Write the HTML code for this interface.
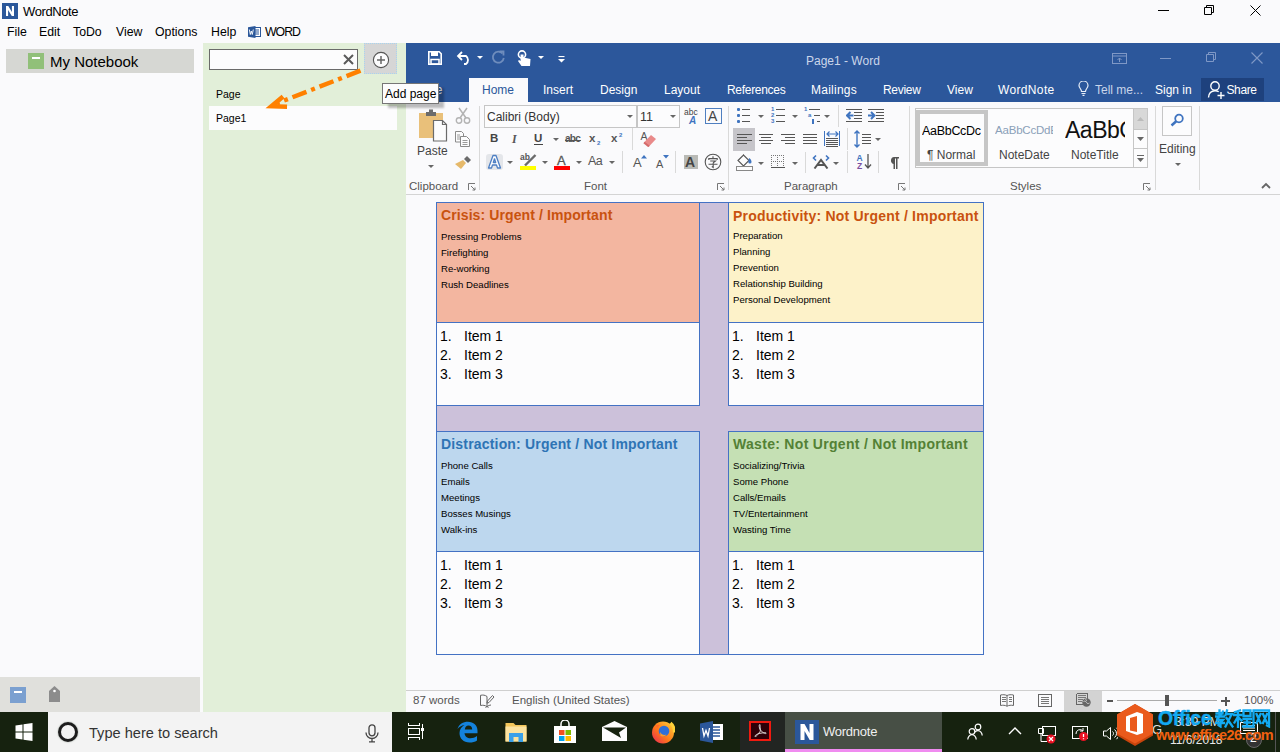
<!DOCTYPE html>
<html><head><meta charset="utf-8">
<style>
*{margin:0;padding:0;box-sizing:border-box}
html,body{width:1280px;height:752px;overflow:hidden;background:#fafafc;font-family:"Liberation Sans",sans-serif;color:#000;position:relative}
.a{position:absolute}
.t{position:absolute;white-space:nowrap;line-height:1}
.hd{font-size:14px;font-weight:bold}
.it{font-size:9.6px;line-height:16px;color:#000}
.li{font-size:14px;line-height:19px;color:#000}
.li span{display:inline-block;width:24px}
.li{margin-top:-0.5px}
.mn{font-size:12.3px}
.tb{font-size:12px;color:#fff}
.sp{width:1px;background:#d9d9d9}
.gl{font-size:11.5px;color:#555}
.ln{width:8px;height:8px}
.dd{width:6px;height:4px;fill:#666}
.sb{font-size:11.5px;color:#555}
</style></head><body>

<!-- ===== App title bar ===== -->
<div class="a" style="left:2px;top:3px;width:16px;height:16px;background:#2b579a"></div>
<svg class="a" style="left:2px;top:3px" width="16" height="16" viewBox="0 0 16 16"><path d="M4 13V3h2.3l3.6 6V3H12v10H9.8L6.1 7v6z" fill="#fff"/></svg>
<div class="t" style="left:23px;top:5px;font-size:13px;color:#000;letter-spacing:-0.4px">WordNote</div>
<div class="a" style="left:1158px;top:10px;width:11px;height:1px;background:#000"></div>
<svg class="a" style="left:1203px;top:4px" width="12" height="12" viewBox="0 0 12 12"><path d="M1.5 3.5h7v7h-7z M3.5 3.5v-2h7v7h-2" fill="none" stroke="#000" stroke-width="1"/></svg>
<svg class="a" style="left:1249.5px;top:4.5px" width="11" height="11" viewBox="0 0 11 11"><path d="M0.5 0.5l10 10M10.5 0.5l-10 10" stroke="#000" stroke-width="1"/></svg>

<!-- ===== Menu bar ===== -->
<div class="t mn" style="left:7px;top:26px">File</div>
<div class="t mn" style="left:39px;top:26px">Edit</div>
<div class="t mn" style="left:73px;top:26px">ToDo</div>
<div class="t mn" style="left:116px;top:26px">View</div>
<div class="t mn" style="left:155px;top:26px">Options</div>
<div class="t mn" style="left:211px;top:26px">Help</div>
<svg class="a" style="left:248px;top:26px" width="13" height="12" viewBox="0 0 13 12"><rect x="5" y="1.5" width="7.5" height="9" fill="#fff" stroke="#2b579a"/><path d="M7 4h4M7 6h4M7 8h4" stroke="#2b579a" stroke-width="1"/><path d="M0 1.2L7.5 0v12L0 10.8z" fill="#2b579a"/><path d="M1.3 3.5l1 5 1-3.5 1 3.5 1-5" fill="none" stroke="#fff" stroke-width="0.9"/></svg>
<div class="t mn" style="left:265px;top:26px;letter-spacing:-1px">WORD</div>

<!-- ===== Left panel ===== -->
<div class="a" style="left:6px;top:49px;width:188px;height:24px;background:#d6d7d3"></div>
<div class="a" style="left:28px;top:53px;width:16px;height:16px;background:#91c079"></div>
<div class="a" style="left:32px;top:57px;width:8px;height:2px;background:#fff"></div>
<div class="t" style="left:50px;top:54px;font-size:15px">My Notebook</div>
<div class="a" style="left:0;top:677px;width:200px;height:35px;background:#e0e0dc"></div>
<div class="a" style="left:10px;top:687px;width:16px;height:16px;background:#7ba0d0"></div>
<div class="a" style="left:14px;top:691px;width:8px;height:2px;background:#fff"></div>
<svg class="a" style="left:49px;top:686px" width="11" height="16" viewBox="0 0 11 16"><path d="M0 5L5.5 0 11 5v11H0z" fill="#8c8c8c"/><circle cx="5.5" cy="5" r="1.3" fill="#fff"/></svg>

<!-- ===== Middle panel ===== -->
<div class="a" style="left:203px;top:43px;width:203px;height:669px;background:#e2efd9"></div>
<div class="a" style="left:209px;top:49px;width:149px;height:21px;background:#fcfcfd;border:1px solid #6a6a6a"></div>
<svg class="a" style="left:343px;top:54px" width="11" height="11" viewBox="0 0 11 11"><path d="M1 1l9 9M10 1l-9 9" stroke="#5a5a5a" stroke-width="2"/></svg>
<div class="a" style="left:364px;top:43px;width:33px;height:31px;background:#d6d6d6;border:1px dotted #a8d4f0"></div>
<svg class="a" style="left:372px;top:51px" width="18" height="18" viewBox="0 0 18 18"><circle cx="9" cy="9" r="7.6" fill="#fcfcfd" stroke="#555" stroke-width="1.1"/><path d="M9 5v8M5 9h8" stroke="#666" stroke-width="1.5"/></svg>
<div class="t" id="pg" style="left:216px;top:89px;font-size:10.5px">Page</div>
<div class="a" style="left:209px;top:106px;width:188px;height:24px;background:#fcfcfd"></div>
<div class="t" id="pg1" style="left:216px;top:113px;font-size:10.5px">Page1</div>
<svg class="a" style="left:260px;top:64px" width="110" height="50" viewBox="260 64 110 50">
<path d="M360.5 70.7L277 103.3" stroke="#ff8000" stroke-width="4.5" stroke-dasharray="15 5 4 5" fill="none"/>
<path d="M265.5 108.3L281.6 94.8 284.5 98.3 277.5 104.2 287.1 104.5 287 109z" fill="#ff8000"/>
</svg>
<!-- ===== Word window ===== -->
<div class="a" style="left:406px;top:43px;width:874px;height:59px;background:#2c579b"></div>
<!-- QAT -->
<svg class="a" style="left:428px;top:51px" width="14" height="14" viewBox="0 0 14 14"><path d="M0.8 0.8h10.4l2 2v10.4H0.8z" fill="none" stroke="#fff" stroke-width="1.6"/><rect x="3" y="1" width="7" height="4" fill="#fff"/><rect x="3" y="8.5" width="8" height="4.5" fill="none" stroke="#fff" stroke-width="1.5"/></svg>
<svg class="a" style="left:456px;top:51px" width="17" height="14" viewBox="0 0 17 14"><path d="M2 5h8a5 5 0 0 1 0 8H8" fill="none" stroke="#fff" stroke-width="1.8"/><path d="M6 1L2 5l4 4" fill="none" stroke="#fff" stroke-width="1.8"/></svg>
<svg class="a" style="left:477px;top:56px" width="6" height="4" viewBox="0 0 6 4"><path d="M0 0h6L3 3z" fill="#fff"/></svg>
<svg class="a" style="left:491px;top:50px" width="15" height="15" viewBox="0 0 15 15"><path d="M11.5 3.5A5.5 5.5 0 1 0 12.8 8" fill="none" stroke="#6f8dbd" stroke-width="1.8"/><path d="M8.5 1.5h4v4" fill="none" stroke="#6f8dbd" stroke-width="1.8"/></svg>
<svg class="a" style="left:517px;top:50px" width="14" height="16" viewBox="0 0 14 16"><circle cx="5" cy="4.5" r="3.6" fill="none" stroke="#fff" stroke-width="1.6"/><path d="M3.6 4.5v6.5L2 10 1 11l3.5 5h8.5L13.5 9 6.5 7.6V4.5z" fill="#fff"/></svg>
<svg class="a" style="left:538px;top:56px" width="6" height="4" viewBox="0 0 6 4"><path d="M0 0h6L3 3z" fill="#fff"/></svg>
<svg class="a" style="left:558px;top:56px" width="7" height="7" viewBox="0 0 7 7"><path d="M0.5 0.5h6" stroke="#fff" stroke-width="1.2"/><path d="M0 3h7L3.5 6.5z" fill="#fff"/></svg>
<div class="t" style="left:806px;top:55px;font-size:12px;color:#cbd6ea">Page1 - Word</div>
<!-- window controls (dim) -->
<svg class="a" style="left:1112px;top:53px" width="15" height="11" viewBox="0 0 15 11"><rect x="0.5" y="0.5" width="14" height="10" fill="none" stroke="#7f98c6"/><path d="M0.5 3h14" stroke="#7f98c6"/><path d="M7.5 9V5M5.5 7l2-2 2 2" fill="none" stroke="#7f98c6"/></svg>
<div class="a" style="left:1160px;top:58px;width:11px;height:1px;background:#7f98c6"></div>
<svg class="a" style="left:1205px;top:51px" width="12" height="12" viewBox="0 0 12 12"><path d="M1.5 3.5h7v7h-7z M3.5 3.5v-2h7v7h-2" fill="none" stroke="#7f98c6" stroke-width="1"/></svg>
<svg class="a" style="left:1251px;top:52px" width="12" height="12" viewBox="0 0 12 12"><path d="M0.5 0.5l11 11M11.5 0.5l-11 11" stroke="#7f98c6" stroke-width="1.1"/></svg>
<!-- tabs -->
<div class="a" style="left:469px;top:78px;width:59px;height:24px;background:#fafafc"></div>
<div class="t tb" style="left:423px;top:84px">File</div>
<div class="t tb" style="left:482px;top:84px;color:#2b579a">Home</div>
<div class="t tb" style="left:543px;top:84px">Insert</div>
<div class="t tb" style="left:600px;top:84px">Design</div>
<div class="t tb" style="left:664px;top:84px">Layout</div>
<div class="t tb" style="left:727px;top:84px;letter-spacing:-0.3px">References</div>
<div class="t tb" style="left:811px;top:84px;letter-spacing:0.25px">Mailings</div>
<div class="t tb" style="left:883px;top:84px;letter-spacing:-0.3px">Review</div>
<div class="t tb" style="left:947px;top:84px">View</div>
<div class="t tb" style="left:998px;top:84px;letter-spacing:0.35px">WordNote</div>
<svg class="a" style="left:1078px;top:81px" width="11" height="15" viewBox="0 0 11 15"><path d="M3.5 10.5C3.5 8 1 7 1 4.5a4.5 4.5 0 0 1 9 0C10 7 7.5 8 7.5 10.5z" fill="none" stroke="#e8eef8" stroke-width="1.2"/><path d="M3.5 12.5h4M4.5 14.3h2" stroke="#e8eef8" stroke-width="1.2"/></svg>
<div class="t tb" style="left:1095px;top:84px;color:#c9d5ea">Tell me...</div>
<div class="t tb" style="left:1155px;top:84px">Sign in</div>
<div class="a" style="left:1201px;top:78px;width:63px;height:23px;background:#1e417d"></div>
<svg class="a" style="left:1207px;top:80px" width="19" height="19" viewBox="0 0 19 19"><circle cx="8" cy="6" r="4.2" fill="none" stroke="#fff" stroke-width="1.4"/><path d="M1.5 17.5c0-4 2.8-6.8 6.5-6.8 1.5 0 2.7 0.4 3.7 1.1" fill="none" stroke="#fff" stroke-width="1.4"/><path d="M14 12v7M10.5 15.5h7" stroke="#fff" stroke-width="1.4"/></svg>
<div class="t tb" style="left:1226.5px;top:84px;letter-spacing:-0.4px">Share</div>

<!-- ribbon area -->
<!-- separators -->
<div class="a sp" style="left:479px;top:106px;height:84px"></div>
<div class="a sp" style="left:728px;top:106px;height:84px"></div>
<div class="a sp" style="left:909px;top:106px;height:84px"></div>
<div class="a sp" style="left:1155px;top:106px;height:84px"></div>
<div class="a sp" style="left:1199px;top:106px;height:84px"></div>
<!-- group labels -->
<div class="t gl" style="left:409px;top:181px">Clipboard</div>
<div class="t gl" style="left:584px;top:181px">Font</div>
<div class="t gl" style="left:784px;top:181px">Paragraph</div>
<div class="t gl" style="left:1010px;top:181px">Styles</div>
<svg class="a ln" style="left:468px;top:183px"><path d="M0.5 7V0.5H7M3 3l4 4M4.5 7H7V4.5" fill="none" stroke="#777"/></svg>
<svg class="a ln" style="left:717px;top:183px"><path d="M0.5 7V0.5H7M3 3l4 4M4.5 7H7V4.5" fill="none" stroke="#777"/></svg>
<svg class="a ln" style="left:898px;top:183px"><path d="M0.5 7V0.5H7M3 3l4 4M4.5 7H7V4.5" fill="none" stroke="#777"/></svg>
<svg class="a ln" style="left:1143px;top:183px"><path d="M0.5 7V0.5H7M3 3l4 4M4.5 7H7V4.5" fill="none" stroke="#777"/></svg>
<svg class="a" style="left:1261px;top:182px" width="10" height="7" viewBox="0 0 10 7"><path d="M1 6l4-4 4 4" fill="none" stroke="#666" stroke-width="1.8"/></svg>

<!-- Clipboard -->
<svg class="a" style="left:418px;top:108px" width="30" height="34" viewBox="0 0 30 34">
<path d="M1 5h24v25H1z" fill="#e9c07a"/>
<path d="M8 4h10v4H8z M11 1.5h4v3h-4z" fill="#6b6b6b"/>
<path d="M15.5 12.5h9l4 4v16.5h-13z" fill="#fcfcfd" stroke="#6b6b6b" stroke-width="1.2"/>
<path d="M24.5 12.5v4h4" fill="none" stroke="#6b6b6b" stroke-width="1.2"/>
</svg>
<div class="t" style="left:417px;top:145px;font-size:12px;color:#444">Paste</div>
<svg class="a dd" style="left:428px;top:165px"><path d="M0 0h6L3 3z"/></svg>
<svg class="a" style="left:455px;top:107px" width="16" height="17" viewBox="0 0 16 17"><path d="M4 1l7 10M12 1L5 11" stroke="#b3b3b3" stroke-width="1.5"/><circle cx="4" cy="13.5" r="2.7" fill="none" stroke="#b3b3b3" stroke-width="1.4"/><circle cx="12" cy="13.5" r="2.7" fill="none" stroke="#b3b3b3" stroke-width="1.4"/></svg>
<svg class="a" style="left:455px;top:131px" width="16" height="16" viewBox="0 0 16 16"><path d="M0.5 0.5h6l2 2v8.5H0.5z" fill="#fcfcfd" stroke="#8a8a8a"/><path d="M5.5 5.5h6l3 3v7h-9z" fill="#fcfcfd" stroke="#8a8a8a"/><path d="M7.5 9.5h5M7.5 11.5h5M7.5 13.5h5M2 4h3M2 6h3M2 8h3" stroke="#9a9a9a"/></svg>
<svg class="a" style="left:455px;top:154px" width="17" height="16" viewBox="0 0 17 16"><path d="M9 5l3-3 4 4-3 3z" fill="#6b6b6b"/><path d="M8 6l3 3-5 6-6-5z" fill="#e6b96a"/></svg>

<!-- Font -->
<div class="a" style="left:484px;top:105px;width:153px;height:23px;border:1px solid #c6c6c6;background:#fcfcfd"></div>
<div class="a" style="left:637px;top:105px;width:43px;height:23px;border:1px solid #c6c6c6;background:#fcfcfd"></div>
<div class="t" style="left:487px;top:111px;font-size:12px;color:#333">Calibri (Body)</div>
<svg class="a dd" style="left:627px;top:115px"><path d="M0 0h6L3 3z"/></svg>
<div class="t" style="left:640px;top:111px;font-size:12.5px;color:#333">11</div>
<svg class="a dd" style="left:670px;top:115px"><path d="M0 0h6L3 3z"/></svg>
<div class="t" style="left:684px;top:108px;font-size:8.5px;color:#444">abc</div>
<div class="t" style="left:689px;top:116px;font-size:10px;font-weight:bold;font-style:italic;color:#3f74c0">A</div>
<div class="a" style="left:705px;top:108px;width:17px;height:16px;border:1.5px solid #4f7fc0"></div>
<div class="t" style="left:708px;top:109px;font-size:14px;color:#444">A</div>

<div class="t" style="left:490px;top:133px;font-size:11.5px;font-weight:bold;color:#444">B</div>
<div class="t" style="left:512px;top:133px;font-size:12px;font-style:italic;font-weight:bold;font-family:'Liberation Serif';color:#555">I</div>
<div class="t" style="left:534px;top:133px;font-size:11.5px;font-weight:bold;color:#444">U</div>
<div class="a" style="left:534px;top:144px;width:9px;height:1px;background:#444"></div>
<svg class="a dd" style="left:553px;top:138px"><path d="M0 0h6L3 3z"/></svg>
<div class="t" style="left:565px;top:133.5px;font-size:10px;font-weight:bold;color:#555;letter-spacing:-0.7px">abc</div>
<div class="a" style="left:565px;top:140px;width:16px;height:1px;background:#555"></div>
<div class="t" style="left:589px;top:133px;font-size:11.5px;font-weight:bold;color:#555">x</div>
<div class="t" style="left:597px;top:140px;font-size:6px;font-weight:bold;color:#3f74c0">2</div>
<div class="t" style="left:611px;top:133px;font-size:11.5px;font-weight:bold;color:#555">x</div>
<div class="t" style="left:619px;top:132px;font-size:6px;font-weight:bold;color:#3f74c0">2</div>
<div class="a sp" style="left:632px;top:128px;height:22px"></div>
<div class="t" style="left:640.5px;top:131px;font-size:10.5px;color:#555">A</div>
<svg class="a" style="left:642px;top:134px" width="15" height="13" viewBox="0 0 15 13"><path d="M9 1l5 4-7 7.5-5-4z" fill="#e98a8a"/><path d="M2 8.5l5 4" stroke="#d46a6a" stroke-width="2"/></svg>

<div class="a" style="left:486px;top:154px;width:17px;height:16px;background:#e4e6ea;border-radius:3px;filter:blur(0.6px)"></div><svg class="a" style="left:487px;top:154px" width="15" height="15" viewBox="0 0 15 15"><path d="M1.5 14L6 1.5h3L13.5 14h-3l-1-3h-4l-1 3zM6.3 8.5h2.4L7.5 4.8z" fill="#fcfcfd" stroke="#4d7fc4" stroke-width="1.3" stroke-linejoin="round"/></svg>
<svg class="a dd" style="left:507px;top:161px"><path d="M0 0h6L3 3z"/></svg>
<div class="t" style="left:520px;top:153px;font-size:8.5px;font-weight:bold;color:#555">ab</div>
<svg class="a" style="left:523px;top:154px" width="14" height="13" viewBox="0 0 14 13"><path d="M12.5 1L2 11.5" stroke="#6b6b6b" stroke-width="2.4"/></svg>
<div class="a" style="left:520px;top:166px;width:16px;height:4px;background:#ffff00"></div>
<svg class="a dd" style="left:542px;top:161px"><path d="M0 0h6L3 3z"/></svg>
<div class="t" style="left:557px;top:154px;font-size:13px;color:#555;-webkit-text-stroke:0.3px #555">A</div>
<div class="a" style="left:554px;top:166px;width:16px;height:4px;background:#ff0000"></div>
<svg class="a dd" style="left:576px;top:161px"><path d="M0 0h6L3 3z"/></svg>
<div class="t" style="left:588px;top:155px;font-size:12.5px;color:#555;letter-spacing:-0.5px">Aa</div>
<svg class="a dd" style="left:609px;top:161px"><path d="M0 0h6L3 3z"/></svg>
<div class="a sp" style="left:622px;top:151px;height:22px"></div>
<div class="t" style="left:633px;top:156px;font-size:13px;color:#555">A</div>
<svg class="a" style="left:641px;top:155px" width="6" height="4" viewBox="0 0 6 4"><path d="M0 3.5h6L3 0z" fill="#3f74c0"/></svg>
<div class="t" style="left:656px;top:159px;font-size:11px;color:#555">A</div>
<svg class="a" style="left:663px;top:155px" width="6" height="4" viewBox="0 0 6 4"><path d="M0 0h6L3 3.5z" fill="#3f74c0"/></svg>
<div class="a sp" style="left:675px;top:151px;height:22px"></div>
<div class="a" style="left:684px;top:155px;width:14px;height:14px;background:#b9bab6"></div>
<div class="t" style="left:685px;top:155px;font-size:14px;font-weight:bold;color:#444">A</div>
<svg class="a" style="left:704px;top:153px" width="18" height="18" viewBox="0 0 18 18"><circle cx="9" cy="9" r="7.8" fill="none" stroke="#555" stroke-width="1.1"/><path d="M9 3.3v1.8M4.8 7V5.6h8.4V7M6.2 8h5.3L9.2 9.8M4.5 11.2h9M9.2 9.8v4.6l-1.4-0.9" fill="none" stroke="#555" stroke-width="1.1"/></svg>

<!-- Paragraph -->
<div class="a" style="left:737px;top:108px;width:3px;height:3px;border-radius:1px;background:#3f74c0"></div>
<div class="a" style="left:742px;top:109px;width:8px;height:1px;background:#555"></div>
<div class="a" style="left:737px;top:114px;width:3px;height:3px;border-radius:1px;background:#3f74c0"></div>
<div class="a" style="left:742px;top:115px;width:8px;height:1px;background:#555"></div>
<div class="a" style="left:737px;top:120px;width:3px;height:3px;border-radius:1px;background:#3f74c0"></div>
<div class="a" style="left:742px;top:121px;width:8px;height:1px;background:#555"></div>
<svg class="a dd" style="left:758px;top:115px"><path d="M0 0h6L3 3z"/></svg>
<div class="t" style="left:771px;top:106px;font-size:6px;font-weight:bold;color:#3f74c0">1</div>
<div class="a" style="left:776px;top:109px;width:9px;height:1px;background:#555"></div>
<div class="t" style="left:771px;top:112px;font-size:6px;font-weight:bold;color:#3f74c0">2</div>
<div class="a" style="left:776px;top:115px;width:9px;height:1px;background:#555"></div>
<div class="t" style="left:771px;top:118px;font-size:6px;font-weight:bold;color:#3f74c0">3</div>
<div class="a" style="left:776px;top:121px;width:9px;height:1px;background:#555"></div>
<svg class="a dd" style="left:792px;top:115px"><path d="M0 0h6L3 3z"/></svg>
<div class="t" style="left:804px;top:106px;font-size:6px;font-weight:bold;color:#3f74c0">1</div>
<div class="a" style="left:809px;top:109px;width:11px;height:1px;background:#555"></div>
<div class="t" style="left:808px;top:112px;font-size:6px;font-weight:bold;color:#3f74c0">a</div>
<div class="a" style="left:814px;top:115px;width:6px;height:1px;background:#555"></div>
<div class="a" style="left:812px;top:119px;width:2px;height:5px;background:#3f74c0"></div>
<div class="a" style="left:817px;top:121px;width:3px;height:1px;background:#555"></div>
<svg class="a dd" style="left:824px;top:115px"><path d="M0 0h6L3 3z"/></svg>
<div class="a sp" style="left:838px;top:105px;height:22px"></div>
<div class="a" style="left:846px;top:109px;width:16px;height:1px;background:#555"></div>
<div class="a" style="left:846px;top:121px;width:16px;height:1px;background:#555"></div>
<div class="a" style="left:854px;top:112px;width:8px;height:1px;background:#555"></div>
<div class="a" style="left:854px;top:115px;width:8px;height:1px;background:#555"></div>
<div class="a" style="left:854px;top:118px;width:8px;height:1px;background:#555"></div>
<svg class="a" style="left:846px;top:111px" width="8" height="9" viewBox="0 0 8 9"><path d="M7.5 4.5H2M4.5 1L1 4.5 4.5 8" fill="none" stroke="#3f74c0" stroke-width="2"/></svg>
<div class="a" style="left:868px;top:109px;width:16px;height:1px;background:#555"></div>
<div class="a" style="left:868px;top:121px;width:16px;height:1px;background:#555"></div>
<div class="a" style="left:876px;top:112px;width:8px;height:1px;background:#555"></div>
<div class="a" style="left:876px;top:115px;width:8px;height:1px;background:#555"></div>
<div class="a" style="left:876px;top:118px;width:8px;height:1px;background:#555"></div>
<svg class="a" style="left:868px;top:111px" width="8" height="9" viewBox="0 0 8 9"><path d="M0 4.5h5.5M3 1l3.5 3.5L3 8" fill="none" stroke="#3f74c0" stroke-width="2"/></svg>
<div class="a" style="left:733px;top:128px;width:22px;height:23px;background:#c6c5ca"></div>
<div class="a" style="left:737px;top:134px;width:15px;height:1px;background:#555"></div>
<div class="a" style="left:737px;top:137px;width:10px;height:1px;background:#555"></div>
<div class="a" style="left:737px;top:140px;width:15px;height:1px;background:#555"></div>
<div class="a" style="left:737px;top:143px;width:10px;height:1px;background:#555"></div>
<div class="a" style="left:759px;top:134px;width:14px;height:1px;background:#555"></div>
<div class="a" style="left:761px;top:137px;width:10px;height:1px;background:#555"></div>
<div class="a" style="left:759px;top:140px;width:14px;height:1px;background:#555"></div>
<div class="a" style="left:761px;top:143px;width:10px;height:1px;background:#555"></div>
<div class="a" style="left:781px;top:134px;width:14px;height:1px;background:#555"></div>
<div class="a" style="left:785px;top:137px;width:10px;height:1px;background:#555"></div>
<div class="a" style="left:781px;top:140px;width:14px;height:1px;background:#555"></div>
<div class="a" style="left:785px;top:143px;width:10px;height:1px;background:#555"></div>
<div class="a" style="left:803px;top:134px;width:14px;height:1px;background:#555"></div>
<div class="a" style="left:803px;top:137px;width:14px;height:1px;background:#555"></div>
<div class="a" style="left:803px;top:140px;width:14px;height:1px;background:#555"></div>
<div class="a" style="left:803px;top:143px;width:14px;height:1px;background:#555"></div>
<div class="a" style="left:824px;top:131px;width:1px;height:15px;background:#3f74c0"></div>
<div class="a" style="left:839px;top:131px;width:1px;height:15px;background:#3f74c0"></div>
<svg class="a" style="left:826px;top:131px" width="13" height="6" viewBox="0 0 13 6"><path d="M1 3h11M3.5 0.5L1 3l2.5 2.5M9.5 0.5L12 3 9.5 5.5" fill="none" stroke="#3f74c0" stroke-width="1.2"/></svg>
<div class="a" style="left:826px;top:138px;width:12px;height:1px;background:#555"></div>
<div class="a" style="left:826px;top:140px;width:12px;height:1px;background:#555"></div>
<div class="a" style="left:826px;top:142px;width:12px;height:1px;background:#555"></div>
<div class="a" style="left:826px;top:144px;width:12px;height:1px;background:#555"></div>
<div class="a" style="left:826px;top:146px;width:12px;height:1px;background:#555"></div>
<div class="a sp" style="left:847px;top:128px;height:22px"></div>
<svg class="a" style="left:854px;top:130px" width="6" height="18" viewBox="0 0 6 18"><path d="M3 1v16M0.5 3.5L3 1l2.5 2.5M0.5 14.5L3 17l2.5-2.5" fill="none" stroke="#3f74c0" stroke-width="1.4"/></svg>
<div class="a" style="left:862px;top:134px;width:9px;height:1px;background:#555"></div>
<div class="a" style="left:862px;top:137px;width:9px;height:1px;background:#555"></div>
<div class="a" style="left:862px;top:140px;width:9px;height:1px;background:#555"></div>
<div class="a" style="left:862px;top:143px;width:9px;height:1px;background:#555"></div>
<svg class="a dd" style="left:875px;top:138px"><path d="M0 0h6L3 3z"/></svg>
<svg class="a" style="left:736px;top:153px" width="17" height="18" viewBox="0 0 17 18"><path d="M7.5 1.5v4.5" stroke="#666" stroke-width="1"/><path d="M2 7.5l5.5-5.5 5.5 5.5-5.5 5.5z" fill="#fcfcfd" stroke="#555" stroke-width="1.1"/><path d="M13 5c1.8 1 2.5 2.5 2.5 4a1.6 1.6 0 0 1-3.2 0z" fill="#3f74c0"/><rect x="0.5" y="13.5" width="16" height="4" fill="#fcfcfd" stroke="#888"/></svg>
<svg class="a dd" style="left:758px;top:162px"><path d="M0 0h6L3 3z"/></svg>
<svg class="a" style="left:771px;top:155px" width="14" height="13" viewBox="0 0 14 13" shape-rendering="crispEdges"><g fill="#777"><rect x="0" y="0" width="1" height="1"/><rect x="0" y="6" width="1" height="1"/><rect x="2" y="0" width="1" height="1"/><rect x="2" y="6" width="1" height="1"/><rect x="4" y="0" width="1" height="1"/><rect x="4" y="6" width="1" height="1"/><rect x="6" y="0" width="1" height="1"/><rect x="6" y="6" width="1" height="1"/><rect x="8" y="0" width="1" height="1"/><rect x="8" y="6" width="1" height="1"/><rect x="10" y="0" width="1" height="1"/><rect x="10" y="6" width="1" height="1"/><rect x="12" y="0" width="1" height="1"/><rect x="12" y="6" width="1" height="1"/><rect x="0" y="0" width="1" height="1"/><rect x="0" y="2" width="1" height="1"/><rect x="0" y="4" width="1" height="1"/><rect x="0" y="6" width="1" height="1"/><rect x="0" y="8" width="1" height="1"/><rect x="0" y="10" width="1" height="1"/><rect x="6" y="0" width="1" height="1"/><rect x="6" y="2" width="1" height="1"/><rect x="6" y="4" width="1" height="1"/><rect x="6" y="6" width="1" height="1"/><rect x="6" y="8" width="1" height="1"/><rect x="6" y="10" width="1" height="1"/><rect x="12" y="0" width="1" height="1"/><rect x="12" y="2" width="1" height="1"/><rect x="12" y="4" width="1" height="1"/><rect x="12" y="6" width="1" height="1"/><rect x="12" y="8" width="1" height="1"/><rect x="12" y="10" width="1" height="1"/></g><rect x="0" y="12" width="14" height="1" fill="#555"/></svg>
<svg class="a dd" style="left:792px;top:162px"><path d="M0 0h6L3 3z"/></svg>
<div class="a sp" style="left:805px;top:152px;height:21px"></div>
<svg class="a" style="left:812px;top:154px" width="18" height="15" viewBox="0 0 18 15"><path d="M4 1.5L1.5 4 4 6.5M14 1.5L16.5 4 14 6.5" fill="none" stroke="#3f74c0" stroke-width="1.6"/><path d="M2.5 14.5L9 6l6.5 8.5M5.5 11h7" fill="none" stroke="#555" stroke-width="2"/></svg>
<svg class="a dd" style="left:833px;top:162px"><path d="M0 0h6L3 3z"/></svg>
<div class="a sp" style="left:847px;top:151px;height:22px"></div>
<div class="t" style="left:856.5px;top:153.5px;font-size:8.5px;font-weight:bold;color:#3f74c0">A</div>
<div class="t" style="left:857px;top:161.5px;font-size:8.5px;font-weight:bold;color:#7a4fa0">Z</div>
<svg class="a" style="left:864px;top:154px" width="8" height="15" viewBox="0 0 8 15"><path d="M4 0v14M1 10.5l3 3.5 3-3.5" fill="none" stroke="#555" stroke-width="1.3"/></svg>
<div class="a sp" style="left:878px;top:151px;height:22px"></div>
<svg class="a" style="left:888px;top:156px" width="12" height="13" viewBox="0 0 12 13"><path d="M6 1H11v1.6H9.5V13H8V2.6H7V13H5.5V8A3.6 3.6 0 0 1 6 1z" fill="#555"/></svg>

<!-- Styles gallery -->
<div class="a" style="left:915px;top:108px;width:233px;height:60px;border:1px solid #c6c6c6;background:#fcfcfd"></div>
<div class="a" style="left:916px;top:110px;width:72px;height:56px;border:4px solid #c6c6c6;background:#fcfcfd"></div>
<div class="t" style="left:922px;top:125px;font-size:12.5px;color:#000;letter-spacing:-0.3px;width:59px;overflow:hidden">AaBbCcDc</div>
<div class="t" style="left:927px;top:149px;font-size:12px;color:#444">&para; Normal</div>
<div class="t" style="left:995px;top:125px;font-size:11.5px;color:#8aa0b8;width:58px;overflow:hidden;letter-spacing:-0.2px">AaBbCcDdE</div>
<div class="t" style="left:999px;top:149px;font-size:12px;color:#444">NoteDate</div>
<div class="t" style="left:1065px;top:118.5px;font-size:23px;color:#111;width:60px;overflow:hidden;letter-spacing:-0.5px">AaBbC</div>
<div class="t" style="left:1071px;top:149px;font-size:12px;color:#444">NoteTitle</div>
<div class="a" style="left:1133px;top:108px;width:15px;height:60px;border:1px solid #c6c6c6;background:#fcfcfd"></div>
<div class="a" style="left:1134px;top:109px;width:13px;height:20px;background:#d8d8d8"></div>
<svg class="a" style="left:1137px;top:117px" width="7" height="4" viewBox="0 0 7 4"><path d="M0 4h7L3.5 0z" fill="#bbb"/></svg>
<div class="a" style="left:1133px;top:129px;width:15px;height:1px;background:#c6c6c6"></div>
<svg class="a" style="left:1137px;top:137px" width="7" height="4" viewBox="0 0 7 4"><path d="M0 0h7L3.5 4z" fill="#666"/></svg>
<div class="a" style="left:1133px;top:148px;width:15px;height:1px;background:#c6c6c6"></div>
<svg class="a" style="left:1137px;top:155px" width="7" height="7" viewBox="0 0 7 7"><path d="M0 0.5h7" stroke="#666"/><path d="M0 3h7L3.5 7z" fill="#666"/></svg>

<!-- Editing -->
<div class="a" style="left:1162px;top:106px;width:30px;height:30px;border:1px solid #c6c6c6;background:#fcfcfd"></div>
<svg class="a" style="left:1170px;top:113px" width="15" height="14" viewBox="0 0 15 14"><circle cx="9" cy="5.5" r="3.8" fill="none" stroke="#3f74c0" stroke-width="1.8"/><path d="M6.2 8.3L1.5 12.5" stroke="#3f74c0" stroke-width="2.5"/></svg>
<div class="t" style="left:1159px;top:143px;font-size:12px;color:#444">Editing</div>
<svg class="a dd" style="left:1175px;top:163px"><path d="M0 0h6L3 3z"/></svg>

<div class="a" style="left:406px;top:194px;width:874px;height:1px;background:#d4d4d4"></div>

<div class="a" style="left:406px;top:690px;width:874px;height:22px;background:#fafafc;border-top:1px solid #cfcfcf"></div>

<!-- ===== Status bar ===== -->
<div class="t sb" style="left:413px;top:694.5px">87 words</div>
<svg class="a" style="left:480px;top:693px" width="15" height="15" viewBox="0 0 15 15"><path d="M7 3.5C5 2 3 1.8 0.5 2.3v10.2C3 12 5 12.2 7 13.7 8.3 12.6 9.5 12.2 11 12" fill="none" stroke="#666" stroke-width="1"/><path d="M7 3.5v10.2" stroke="#666"/><path d="M9 9.5l5-5.5-1.5-1.5-5 5.5-0.6 2.2z" fill="none" stroke="#666"/><path d="M5.5 14.5l1.5-1 1.5 1" fill="none" stroke="#666"/></svg>
<div class="t sb" style="left:512px;top:694.5px">English (United States)</div>
<svg class="a" style="left:1000px;top:694px" width="14" height="13" viewBox="0 0 14 13"><path d="M7 1.5C5 0.6 3 0.5 0.5 1v10.5C3 11 5 11.2 7 12.2c2-1 4-1.2 6.5-0.7V1C11 0.5 9 0.6 7 1.5zM7 1.5v10.7" fill="none" stroke="#666"/><path d="M2 3.5h3.5M2 5.5h3.5M2 7.5h3.5M8.5 3.5H12M8.5 5.5H12M8.5 7.5H12" stroke="#777" shape-rendering="crispEdges"/></svg>
<svg class="a" style="left:1038px;top:694px" width="14" height="13" viewBox="0 0 14 13" shape-rendering="crispEdges"><rect x="0.5" y="0.5" width="13" height="12" fill="none" stroke="#666"/><path d="M3 3.5h8M3 5.5h8M3 7.5h8M3 9.5h8" stroke="#777"/></svg>
<div class="a" style="left:1064px;top:691px;width:38px;height:21px;background:#d3d3d3"></div>
<svg class="a" style="left:1076px;top:693px" width="15" height="14" viewBox="0 0 15 14"><path d="M0.5 0.5h11v5M0.5 0.5v11h6" fill="none" stroke="#666" shape-rendering="crispEdges"/><path d="M2 2.5h8M2 4.5h8M2 6.5h5M2 8.5h4" stroke="#777" shape-rendering="crispEdges"/><circle cx="10.5" cy="9.5" r="4.2" fill="#666"/><path d="M7.5 8.5c1-1 2.5 0 3 1 .5 1 1.5 1.5 3 0.5M10 5.5c-0.5 1 0 2 1 2.5" stroke="#d3d3d3" fill="none" stroke-width="0.9"/></svg>
<div class="a" style="left:1107px;top:700px;width:6px;height:2px;background:#555"></div>
<div class="a" style="left:1117px;top:700px;width:100px;height:1px;background:#aaa"></div>
<div class="a" style="left:1165px;top:695px;width:4px;height:11px;background:#555"></div>
<div class="a" style="left:1221px;top:700px;width:9px;height:2px;background:#555"></div>
<div class="a" style="left:1224.5px;top:696.5px;width:2px;height:9px;background:#555"></div>
<div class="t sb" style="left:1244px;top:694.5px">100%</div>

<!-- ===== Document table ===== -->
<div class="a" style="left:436px;top:202px;width:548px;height:453px;background:#ccc1da;border:1px solid #4472c4"></div>
<!-- TL -->
<div class="a" style="left:436px;top:202px;width:264px;height:204px;border:1px solid #4472c4;background:#fcfcfd"></div>
<div class="a" style="left:437px;top:203px;width:262px;height:119px;background:#f3b6a0"></div>
<div class="a" style="left:437px;top:322px;width:262px;height:1px;background:#4472c4"></div>
<!-- TR -->
<div class="a" style="left:728px;top:202px;width:256px;height:204px;border:1px solid #4472c4;background:#fcfcfd"></div>
<div class="a" style="left:729px;top:203px;width:254px;height:119px;background:#fdf2c9"></div>
<div class="a" style="left:729px;top:322px;width:254px;height:1px;background:#4472c4"></div>
<!-- BL -->
<div class="a" style="left:436px;top:431px;width:264px;height:224px;border:1px solid #4472c4;background:#fcfcfd"></div>
<div class="a" style="left:437px;top:432px;width:262px;height:119px;background:#bdd7ee"></div>
<div class="a" style="left:437px;top:551px;width:262px;height:1px;background:#4472c4"></div>
<!-- BR -->
<div class="a" style="left:728px;top:431px;width:256px;height:224px;border:1px solid #4472c4;background:#fcfcfd"></div>
<div class="a" style="left:729px;top:432px;width:254px;height:119px;background:#c5e0b4"></div>
<div class="a" style="left:729px;top:551px;width:254px;height:1px;background:#4472c4"></div>

<div class="t hd" id="h1" style="left:441px;top:208px;letter-spacing:0.1px;color:#c9520f">Crisis: Urgent / Important</div>
<div class="t it" style="left:441px;top:229px">Pressing Problems<br>Firefighting<br>Re-working<br>Rush Deadlines</div>
<div class="t li" style="left:440px;top:327px"><span>1.</span>Item 1<br><span>2.</span>Item 2<br><span>3.</span>Item 3</div>

<div class="t hd" id="h2" style="left:733px;top:209px;letter-spacing:0.21px;color:#c9520f">Productivity: Not Urgent / Important</div>
<div class="t it" style="left:733px;top:228px">Preparation<br>Planning<br>Prevention<br>Relationship Building<br>Personal Development</div>
<div class="t li" style="left:732px;top:327px"><span>1.</span>Item 1<br><span>2.</span>Item 2<br><span>3.</span>Item 3</div>

<div class="t hd" id="h3" style="left:441px;top:437px;letter-spacing:0.18px;color:#2e74b5">Distraction: Urgent / Not Important</div>
<div class="t it" style="left:441px;top:458px">Phone Calls<br>Emails<br>Meetings<br>Bosses Musings<br>Walk-ins</div>
<div class="t li" style="left:440px;top:556px"><span>1.</span>Item 1<br><span>2.</span>Item 2<br><span>3.</span>Item 3</div>

<div class="t hd" id="h4" style="left:733px;top:437px;letter-spacing:0.3px;color:#538135">Waste: Not Urgent / Not Important</div>
<div class="t it" style="left:733px;top:458px">Socializing/Trivia<br>Some Phone<br>Calls/Emails<br>TV/Entertainment<br>Wasting Time</div>
<div class="t li" style="left:732px;top:556px"><span>1.</span>Item 1<br><span>2.</span>Item 2<br><span>3.</span>Item 3</div>

<!-- ===== Taskbar ===== -->
<div class="a" style="left:0;top:712px;width:1280px;height:40px;background:#16220f"></div>
<svg class="a" style="left:15px;top:723px" width="18" height="18" viewBox="0 0 18 18"><path d="M0.5 2.5L7.5 1.5v7H0.5zM8.5 1.3L17.5 0v8.5h-9zM0.5 9.5h7v7l-7-1zM8.5 9.5h9V18l-9-1.3z" fill="#fff"/></svg>
<div class="a" style="left:48px;top:712px;width:344px;height:40px;background:#f3f3f3"></div>
<div class="a" style="left:58px;top:722px;width:20px;height:20px;border-radius:50%;border:3px solid #1c1c1c;box-shadow:0 0 1.5px #7a8a7a"></div>
<div class="t" style="left:89px;top:725.5px;font-size:14.6px;color:#333">Type here to search</div>
<svg class="a" style="left:365px;top:724px" width="14" height="19" viewBox="0 0 14 19"><rect x="4" y="0.8" width="6" height="11" rx="3" fill="none" stroke="#444" stroke-width="1.3"/><path d="M1 8.5a6 6 0 0 0 12 0M7 14.5v3M4 17.8h6" fill="none" stroke="#444" stroke-width="1.3"/></svg>
<!-- task icons -->
<svg class="a" style="left:407px;top:723px" width="18" height="17" viewBox="0 0 18 17" shape-rendering="crispEdges"><g fill="#fff"><rect x="1" y="2" width="12" height="1"/><rect x="1" y="0" width="1" height="3"/><rect x="12" y="0" width="1" height="3"/><rect x="1" y="5" width="12" height="1"/><rect x="1" y="5" width="1" height="7"/><rect x="12" y="5" width="1" height="7"/><rect x="1" y="11" width="12" height="1"/><rect x="1" y="14" width="12" height="1"/><rect x="1" y="14" width="1" height="3"/><rect x="12" y="14" width="1" height="3"/><rect x="15" y="1" width="1" height="15"/><rect x="14" y="5" width="3" height="3"/></g></svg>
<svg class="a" style="left:457px;top:721px" width="21" height="22" viewBox="0 0 21 22"><path d="M0.5 8C2 3 6 0.8 11 0.8c5.5 0 9.5 3.5 9.5 9v2.5H7.5c0.3 3 2.8 5 6 5 2.3 0 4.5-0.8 6.5-2.2v4.3C18 20.8 15.5 21.5 12.5 21.5 6.5 21.5 2.5 17.5 2.5 12c0-3.5 2-6.5 5-8C4.5 4.5 2 6 0.5 8zM7.8 8.6h7.4c0-2.5-1.5-4-3.7-4S8.2 6 7.8 8.6z" fill="#1482dc"/></svg>
<svg class="a" style="left:505px;top:722px" width="22" height="20" viewBox="0 0 22 20"><path d="M0.5 1h8l2 2h11v16.5H0.5z" fill="#f2c65a"/><path d="M0.5 4.5h21v15H0.5z" fill="#fbe3a0"/><path d="M4 11h14v9h-4.5v-5h-5v5H4z" fill="#3aa0e8"/></svg>
<svg class="a" style="left:553px;top:720px" width="24" height="23" viewBox="0 0 24 23"><path d="M8 6V4a4 4 0 0 1 8 0v2" fill="none" stroke="#fff" stroke-width="1.5"/><path d="M1 6h22v17H1z" fill="#fff"/><rect x="6" y="10" width="5.5" height="5" fill="#f25022"/><rect x="12.5" y="10" width="5.5" height="5" fill="#7fba00"/><rect x="6" y="16" width="5.5" height="5" fill="#00a4ef"/><rect x="12.5" y="16" width="5.5" height="5" fill="#ffb900"/></svg>
<svg class="a" style="left:602px;top:721px" width="25" height="20" viewBox="0 0 25 20"><path d="M0 6L12.5 0 25 6v14H0z" fill="#fcfcfd"/><path d="M1 6.5h23l-7 5 2 5.5z" fill="#16220f"/></svg>
<svg class="a" style="left:651px;top:720px" width="24" height="24" viewBox="0 0 24 24"><defs><linearGradient id="ffg" x1="0" y1="1" x2="1" y2="0"><stop offset="0" stop-color="#e8205a"/><stop offset="0.45" stop-color="#ff7a1a"/><stop offset="1" stop-color="#ffd23a"/></linearGradient></defs><circle cx="12" cy="12.5" r="11" fill="url(#ffg)"/><path d="M19.5 3c2.5 2 4 5 4 9.5" fill="none" stroke="#ffd23a" stroke-width="3"/><circle cx="13" cy="11" r="5.3" fill="#2f6fd8"/><path d="M9 12c1.5 3 4.5 3.5 6.5 2.5-1 2-4 2.5-6 1.5z" fill="#ff9a2a"/><path d="M4 6c1.5-1 3.5-1.5 5-1-1.5 1-2 2-2 3.5z" fill="#ff6a2a"/></svg>
<svg class="a" style="left:700px;top:721px" width="24" height="22" viewBox="0 0 24 22"><path d="M9 3h14v16H9z" fill="#fff"/><path d="M12 6h8M12 9h8M12 12h8M12 15h8" stroke="#2b579a" stroke-width="1.3"/><path d="M0 2.5L13 0v22L0 19.5z" fill="#2b579a"/><path d="M2.5 7l1.5 8 2-5.5 2 5.5 1.5-8" fill="none" stroke="#fff" stroke-width="1.3"/></svg>
<div class="a" style="left:740px;top:712px;width:45px;height:40px;background:#222522"></div><div class="a" style="left:749px;top:721px;width:22px;height:20px;background:#2e0008;border:2px solid #f01a10"></div>
<svg class="a" style="left:752px;top:723px" width="16" height="16" viewBox="0 0 16 16"><path d="M8 1.5c-1 0-1 1.5-0.5 3.5l1 3L5 12.5c-1 1-2.5 1.5-2 0.5 0.5-1 2-2 4-2.5l5.5-1c1.5 0 2 0.5 1.5 1-0.5 0.3-2 0-3.5-1.3L8.5 7c-0.5-2-0.5-4-0.5-5.5z" fill="none" stroke="#d8d0d0" stroke-width="1"/></svg>

<div class="a" style="left:785px;top:712px;width:157px;height:40px;background:#474f45"></div>
<div class="a" style="left:785px;top:749px;width:157px;height:3px;background:#f08cf0"></div>
<div class="a" style="left:795px;top:720px;width:24px;height:24px;background:#2b579a"></div>
<svg class="a" style="left:795px;top:720px" width="24" height="24" viewBox="0 0 24 24"><path d="M5.5 20V4h4l5 9V4h4v16h-3.8L9.5 11v9z" fill="#fff"/></svg>
<div class="t" style="left:823px;top:725px;font-size:13px;color:#f0f0f0;letter-spacing:-0.25px">Wordnote</div>
<!-- tray -->
<svg class="a" style="left:967px;top:723px" width="16" height="17" viewBox="0 0 16 17"><circle cx="11" cy="4" r="2.8" fill="none" stroke="#fff" stroke-width="1.2"/><circle cx="5" cy="8.5" r="2.8" fill="none" stroke="#fff" stroke-width="1.2"/><path d="M0.8 16.5c0-2.8 2-4.8 4.2-4.8s4.2 2 4.2 4.8M8 9c1-1 2-1.3 3-1.3 2.2 0 4.2 2 4.2 4.8" fill="none" stroke="#fff" stroke-width="1.2"/></svg>
<svg class="a" style="left:1008px;top:727px" width="14" height="8" viewBox="0 0 14 8"><path d="M1 7l6-6 6 6" fill="none" stroke="#fff" stroke-width="1.4"/></svg>
<svg class="a" style="left:1038px;top:726px" width="18" height="18" viewBox="0 0 18 18"><rect x="4.5" y="0.5" width="13" height="9" fill="none" stroke="#fff"/><path d="M0.5 2.5h5v5h-5zM3 7.5v8h6M11 9.5v2" fill="none" stroke="#fff"/><circle cx="13" cy="13" r="4.5" fill="#e81123"/><path d="M11 11l4 4M15 11l-4 4" stroke="#fff" stroke-width="1.2"/></svg>
<svg class="a" style="left:1072px;top:724px" width="17" height="18" viewBox="0 0 17 18"><rect x="0.5" y="2.5" width="15" height="12" fill="none" stroke="#fff"/><path d="M4 10a4 4 0 0 1 7-3M11 4v3H8" fill="none" stroke="#fff"/><circle cx="11.5" cy="12.5" r="4.5" fill="#e81123"/><path d="M11.5 10v3M11.5 14.3v1" stroke="#fff" stroke-width="1.3"/></svg>
<svg class="a" style="left:1103px;top:727px" width="15" height="13" viewBox="0 0 15 13"><path d="M0.5 4h3l4-3.5v12l-4-3.5h-3z" fill="none" stroke="#fff"/><path d="M9.5 4.5a2.5 2.5 0 0 1 0 4M11.5 2.5a5 5 0 0 1 0 8M13.5 0.8a7.5 7.5 0 0 1 0 11.4" fill="none" stroke="#fff"/></svg>
<div class="t" style="left:1152px;top:723px;font-size:13px;color:#ddd">G</div>
<div class="t" style="left:1175px;top:716px;font-size:12px;color:#e8e8e8">3:39 PM</div>
<div class="t" style="left:1170px;top:734px;font-size:12px;color:#e8e8e8">11/6/2018</div>
<svg class="a" style="left:1240px;top:722px" width="22" height="27" viewBox="0 0 22 27"><path d="M0.5 0.5h17v11h-17z" fill="none" stroke="#fff"/><path d="M3 3.5h12M3 6h12M3 8.5h12" stroke="#fff"/><circle cx="14" cy="18" r="7.5" fill="#333" stroke="#666"/></svg>
<div class="t" style="left:1250px;top:732px;font-size:12px;color:#fff">2</div>
<div class="a" style="left:1275px;top:712px;width:1px;height:40px;background:#555"></div>
<!-- watermark -->
<svg class="a" style="left:1116px;top:703px" width="38" height="44" viewBox="0 0 38 44"><path d="M19 1L37 11.5v21L19 43 1 32.5v-21z" fill="#c8440c"/><path d="M19 1L37 11.5v19L19 40.5 1 30.5v-19z" fill="#ea5a1c"/><path d="M10 13.5l11-4.5 6 2v19l-6 2-11-4z" fill="#fff"/><path d="M14 15l7-2v16l-7-1.5z" fill="#ea5a1c"/></svg>
<div class="t" id="wm1" style="left:1158px;top:708.5px;font-size:19.5px;font-weight:bold;color:#12aaf2;letter-spacing:-0.3px;-webkit-text-stroke:0.4px #12aaf2">Office</div>
<svg class="a" style="left:1215px;top:709px" width="56" height="19" viewBox="0 0 56 19"><g fill="none" stroke="#12aaf2" stroke-width="2.3" stroke-linecap="square">
<path d="M1.5 4.5h6M4.5 1.5v5M0.5 7.5h8.5M8 2.5L2.5 10M2.5 11h5.5l-2 2M5.5 13v4.5l-1.5-1M0.5 14h8.5"/>
<path d="M12 1.5l-1.5 4.5M11 5h6.5M16 6.5L10.5 17.5M11.5 9L17.5 17.5"/>
<path d="M25 1.5l-5 1.5M19 6h7.5M23 2.5v16M23 7.5l-3.5 6M23.5 8.5l3 3"/>
<path d="M28.5 1.5h7v5.5h-7zM28.5 10h7.5M29.5 13.5h5.5M28 17.5h8.5M32 10v7.5"/>
<path d="M38.5 18V1.5h15.5v16l-2-1M41.5 5l4 9M45.5 5l-4 9M48 5l4 9M52 5l-4 9"/>
</g></svg>
<div class="t" id="wm2" style="left:1156px;top:728px;font-size:14.5px;font-weight:bold;color:#f0600f;letter-spacing:-0.55px">www.office26.com</div>

<!-- tooltip -->
<div class="a" style="left:388px;top:88px;width:56px;height:20px;background:rgba(0,0,0,0.25);filter:blur(1.2px)"></div>
<div class="a" style="left:382px;top:83px;width:57px;height:21px;background:#fcfcfd;border:1px solid #767676"></div>
<div class="t" style="left:385px;top:88px;font-size:12px;color:#000">Add page</div>

</body></html>
